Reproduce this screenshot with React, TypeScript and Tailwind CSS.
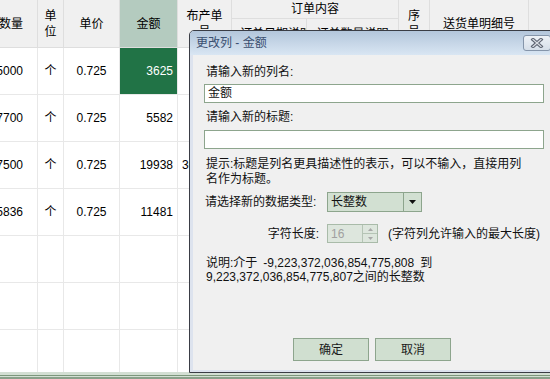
import React from "react";

const rows = [
  { q: "5000", u: "个", p: "0.725", a: "3625", sel: true, c4: "" },
  { q: "7700", u: "个", p: "0.725", a: "5582", sel: false, c4: "" },
  { q: "7500", u: "个", p: "0.725", a: "19938", sel: false, c4: "3001" },
  { q: "5836", u: "个", p: "0.725", a: "11481", sel: false, c4: "" },
  { q: "", u: "", p: "", a: "", sel: false, c4: "" },
  { q: "", u: "", p: "", a: "", sel: false, c4: "" },
  { q: "", u: "", p: "", a: "", sel: false, c4: "" },
];

function Row({ r }: { r: (typeof rows)[number] }) {
  const b = "h-full shrink-0 border-r border-[#e8e8e8] flex items-center";
  return (
    <div className="flex h-[47px] shrink-0 border-b border-[#e8e8e8] bg-white">
      <div className={`${b} w-[38px] justify-end overflow-hidden pr-[14px] whitespace-nowrap`}>{r.q}</div>
      <div className={`${b} w-[26px] justify-center`}>{r.u}</div>
      <div className={`${b} w-[56px] justify-center`}>{r.p}</div>
      <div
        className={`${b} w-[58px] justify-end pr-[4px] ${
          r.sel ? "bg-[#217346] text-white" : ""
        }`}
      >
        {r.a}
      </div>
      <div className={`${b} w-[54px] pl-[4px] overflow-hidden whitespace-nowrap`}>{r.c4}</div>
      <div className={`${b} w-[75px]`} />
      <div className={`${b} w-[92px]`} />
      <div className={`${b} w-[31px]`} />
      <div className={`${b} w-[99px]`} />
      <div className="h-full flex-1" />
    </div>
  );
}

function Header() {
  const b = "h-full shrink-0 border-r border-[#dedede] flex items-center text-center leading-[16px]";
  return (
    <div className="flex h-[48px] shrink-0 border-b border-[#dedede] bg-[#f0f0f0]">
      <div className={`${b} w-[38px] justify-end overflow-hidden pr-[14px] whitespace-nowrap`}>数量</div>
      <div className={`${b} w-[26px] justify-center`}>
        单<br />位
      </div>
      <div className={`${b} w-[56px] justify-center`}>单价</div>
      <div className={`${b} w-[58px] justify-center bg-[#b4cbbf]`}>金额</div>
      <div className={`${b} w-[54px] justify-center`}>
        布产单<br />号
      </div>
      <div className="flex h-full w-[167px] shrink-0 flex-col">
        <div className="flex h-[19px] shrink-0 items-center justify-center border-b border-r border-[#dedede]">
          订单内容
        </div>
        <div className="flex flex-1">
          <div className={`${b} w-[75px] overflow-hidden whitespace-nowrap pl-[8px] pt-[2px]`}>订单日期说明</div>
          <div className={`${b} w-[92px] justify-center whitespace-nowrap pt-[2px]`}>订单数量说明</div>
        </div>
      </div>
      <div className={`${b} w-[31px] justify-center`}>
        序<br />号
      </div>
      <div className={`${b} w-[99px] justify-center`}>送货单明细号</div>
      <div className="h-full flex-1" />
    </div>
  );
}

function Dialog() {
  return (
    <div className="absolute left-[189px] top-[30px] flex h-[343px] w-[370px] flex-col overflow-hidden rounded-t-[5px] border border-[#3a3d45] bg-[#f0f0f0]">
      {/* title bar */}
      <div className="relative flex h-[24px] shrink-0 items-center bg-gradient-to-b from-[#b3c6db] to-[#d9e6f3] pl-[6px] text-[12px] text-[#3a4f70]">
        更改列 - 金额
        <div className="absolute left-[333px] top-[4px] flex h-[16px] w-[28px] items-center justify-center rounded-[3px] border border-[#8595aa] bg-gradient-to-b from-[#eef2f7] to-[#d6dfe9]">
          <svg width="14" height="10" viewBox="0 0 14 10">
            <path d="M3 1.5 L11 8.5 M11 1.5 L3 8.5" stroke="#5b6270" strokeWidth="3.4" strokeLinecap="square" fill="none" />
            <path d="M3 1.5 L11 8.5 M11 1.5 L3 8.5" stroke="#d8dce2" strokeWidth="1.3" strokeLinecap="square" fill="none" />
          </svg>
        </div>
      </div>
      {/* body */}
      <div className="flex flex-1 flex-col border-b-[2px] border-l-[3px] border-[#dde3ee] pl-[11px] text-[12px] text-[#111]">
        <div className="mt-[9px] h-[16px] pl-[2px] leading-[16px]">请输入新的列名:</div>
        <div className="mt-[4px] h-[19px] w-[340px] border border-[#8da58d] bg-white pl-[3px] leading-[17px]">金额</div>
        <div className="mt-[6px] h-[16px] pl-[2px] leading-[16px]">请输入新的标题:</div>
        <div className="mt-[5px] h-[19px] w-[340px] border border-[#8da58d] bg-white" />
        <div className="mt-[8px] w-[335px] pl-[2px] leading-[15px]">
          <div className="whitespace-nowrap">提示:标题是列名更具描述性的表示，可以不输入，直接用列</div>
          <div>名作为标题。</div>
        </div>
        <div className="mt-[5px] flex h-[20px] items-center">
          <div className="w-[115px] pl-[1px] whitespace-nowrap">请选择新的数据类型:</div>
          <div className="ml-[8px] flex h-[20px] w-[95px] border border-[#8da58d] bg-[#d2e0d2]">
            <div className="flex flex-1 items-center pl-[3px]">长整数</div>
            <div className="flex w-[18px] items-center justify-center border-l border-[#8da58d]">
              <svg width="7" height="4" viewBox="0 0 7 4">
                <path d="M0 0 H7 L3.5 4 Z" fill="#111" />
              </svg>
            </div>
          </div>
        </div>
        <div className="mt-[12px] flex h-[19px] items-center">
          <div className="w-[115px] text-right whitespace-nowrap">字符长度:</div>
          <div className="ml-[8px] flex h-[19px] w-[51px] border border-[#a9bba9] bg-[#dde6dd]">
            <div className="flex flex-1 items-center pl-[3px] text-[#a0a0a0]">16</div>
            <div className="flex w-[15px] flex-col border-l border-[#b5c4b5]">
              <div className="flex flex-1 items-center justify-center border-b border-[#b5c4b5]">
                <svg width="5" height="3" viewBox="0 0 5 3">
                  <path d="M0 3 H5 L2.5 0 Z" fill="#a8a8a8" />
                </svg>
              </div>
              <div className="flex flex-1 items-center justify-center">
                <svg width="5" height="3" viewBox="0 0 5 3">
                  <path d="M0 0 H5 L2.5 3 Z" fill="#a8a8a8" />
                </svg>
              </div>
            </div>
          </div>
          <div className="ml-[10px] whitespace-nowrap">(字符列允许输入的最大长度)</div>
        </div>
        <div className="mt-[13px] pl-[2px] leading-[14px] whitespace-nowrap">
          <div>
            说明:介于{"\u2002"}-9,223,372,036,854,775,808{"\u2002"}到
          </div>
          <div>9,223,372,036,854,775,807之间的长整数</div>
        </div>
        <div className="ml-[89px] mt-[54px] flex gap-[6px]">
          <div className="flex h-[23px] w-[76px] items-center justify-center border border-[#8da58d] bg-[#d0dfd0] text-[#1a1a1a]">
            确定
          </div>
          <div className="flex h-[23px] w-[76px] items-center justify-center border border-[#8da58d] bg-[#d0dfd0] text-[#1a1a1a]">
            取消
          </div>
        </div>
      </div>
    </div>
  );
}

export default function App() {
  return (
    <div className="relative flex h-[379px] w-[550px] flex-col overflow-hidden bg-white font-['Liberation_Sans','Noto_Sans_CJK_SC',sans-serif] text-[12px] text-black">
      <div className="flex h-[372px] shrink-0 flex-col overflow-hidden">
        <Header />
        {rows.map((r, i) => (
          <Row key={i} r={r} />
        ))}
      </div>
      <div className="flex flex-1 flex-col">
        <div className="h-[3px] bg-[#d3dfd3]" />
        <div className="h-[1px] bg-[#7c977c]" />
        <div className="h-[1px] bg-[#d3dfd3]" />
        <div className="flex-1 bg-[#8aa08a]" />
      </div>
      <Dialog />
    </div>
  );
}
